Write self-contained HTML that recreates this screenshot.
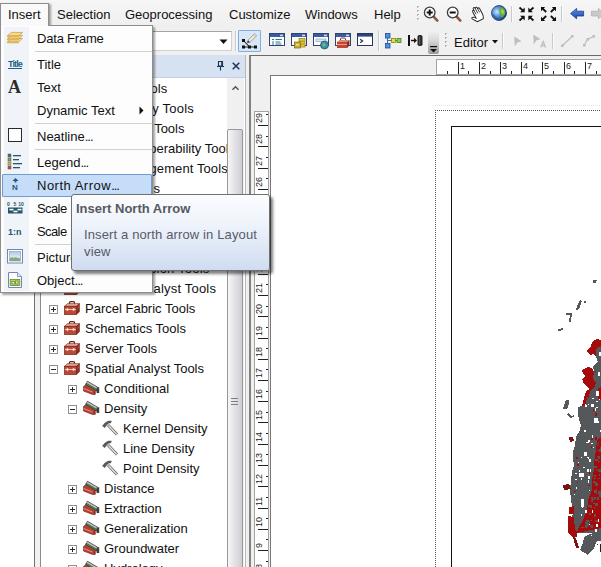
<!DOCTYPE html>
<html><head><meta charset="utf-8"><title>ArcMap</title>
<style>
*{box-sizing:border-box;margin:0;padding:0}
html,body{width:601px;height:567px;overflow:hidden;background:#f0f0f0;font-family:"Liberation Sans",sans-serif;font-size:13px;color:#1c1c1c}
body{position:relative}
.a{position:absolute}
svg{position:absolute;overflow:visible}
#menubar{position:absolute;left:0;top:0;width:601px;height:28px;background:linear-gradient(#f6f6f6,#efefef)}
.mi{position:absolute;top:7px;height:16px;line-height:16px;white-space:nowrap;color:#111}
#ins{position:absolute;left:0px;top:3px;width:49px;height:23px;border:1px solid #8e8e8e;border-bottom:none;background:#f9f9f9;box-shadow:2px 1px 2px rgba(0,0,0,.35)}
#tb2{position:absolute;left:0;top:28px;width:601px;height:27px;background:#f0f0f0}
#combo{position:absolute;left:100px;top:31px;width:132px;height:20px;background:#fff;border:1px solid #d0d0d0;border-top-color:#a5a5a5}
#toc{position:absolute;left:0;top:55px;width:35px;height:512px;background:#fff;border-right:1px solid #6f6f6f}
#tbx{position:absolute;left:40px;top:55px;width:206px;height:512px;background:#fff;border-left:1px solid #8c8c8c;border-right:1px solid #b8b8b8}
#tbxhead{position:absolute;left:0;top:0;width:204px;height:23px;background:#d6e2f1;border-bottom:1px solid #c3d0e2}
.row{position:absolute;height:20px;white-space:nowrap;line-height:20px;color:#111}
.pm{position:absolute;width:9px;height:9px;border:1px solid #8f8f8f;background:#fff}
.pm:before{content:"";position:absolute;left:1px;top:3px;width:5px;height:1px;background:#2a2a2a}
.pm.p:after{content:"";position:absolute;left:3px;top:1px;width:1px;height:5px;background:#2a2a2a}
#sb{position:absolute;left:186px;top:23px;width:17px;height:490px;background:#f0f0f0}
#thumb{position:absolute;left:0;top:51px;width:16px;height:560px;border:1px solid #989898;border-radius:2px;background:linear-gradient(90deg,#f6f6f7,#e4e4e8 45%,#cdcdd3)}
#mapw{position:absolute;left:249px;top:55px;width:360px;height:520px;border-top:1px solid #696969;border-left:2px solid #828282;background:#f0f0f0}
#page{position:absolute;left:270px;top:75px;width:340px;height:500px;background:#fff;border-left:1px solid #777;border-top:1px solid #777}
#vr{position:absolute;left:254px;top:111px;width:15px;height:470px;background:#fff;border:1px solid #a3a3a3}
#hr{position:absolute;left:436px;top:59px;width:170px;height:16px;background:#fff;border:1px solid #a3a3a3}
.rl{position:absolute;font-size:9px;line-height:9px;color:#222;white-space:nowrap}
#menu{position:absolute;left:0px;top:25px;width:153px;height:268px;background:#fdfdfd;border:1px solid #8e8e8e;box-shadow:2px 2px 2px rgba(0,0,0,.36)}
#gut{position:absolute;left:3px;top:1px;width:25px;height:264px;background:#f0f3f8}
.m{position:absolute;left:36px;height:23px;line-height:23px;white-space:nowrap;color:#111}
.sep{position:absolute;left:34px;width:117px;height:1px;background:#d0d0d0}
#hl{position:absolute;left:1px;top:148px;width:150px;height:23px;border:1px solid #6f9dd3;border-radius:1px;background:#c5ddf8}
#tip{position:absolute;left:71px;top:194px;width:199px;height:77px;border:1px solid #707070;border-radius:3px;background:linear-gradient(#fbfcfe,#eef3fb 40%,#cfdcf0);box-shadow:3px 3px 3px rgba(0,0,0,.5);color:#565c66}
</style></head><body>
<div id="menubar">
 <div id="ins"></div>
 <span class="mi" style="left:8px">Insert</span>
 <span class="mi" style="left:57px">Selection</span>
 <span class="mi" style="left:125px">Geoprocessing</span>
 <span class="mi" style="left:229px">Customize</span>
 <span class="mi" style="left:305px">Windows</span>
 <span class="mi" style="left:374px">Help</span>
 <svg style="left:417px;top:6px" width="3" height="16" viewBox="0 0 3 16"><rect x="0" y="0" width="2" height="2" fill="#aeb2b8"/><rect x="1" y="1" width="1" height="1" fill="#fdfdfd"/><rect x="0" y="4" width="2" height="2" fill="#aeb2b8"/><rect x="1" y="5" width="1" height="1" fill="#fdfdfd"/><rect x="0" y="8" width="2" height="2" fill="#aeb2b8"/><rect x="1" y="9" width="1" height="1" fill="#fdfdfd"/><rect x="0" y="12" width="2" height="2" fill="#aeb2b8"/><rect x="1" y="13" width="1" height="1" fill="#fdfdfd"/></svg>
<svg style="left:423px;top:5.5px" width="17" height="17" viewBox="0 0 17 17"><path d="M10.200 10.200L14.300 14.600" stroke="#8a5a3c" stroke-width="2.600" stroke-linecap="round"/><circle cx="6.7" cy="6.5" r="5.3" fill="#fdfdfd" stroke="#3c3c3c" stroke-width="1.3"/><path d="M3.7 6.5h6M6.7 3.5v6" stroke="#111" stroke-width="2"/></svg>
<svg style="left:445.5px;top:5.5px" width="17" height="17" viewBox="0 0 17 17"><path d="M10.200 10.200L14.300 14.600" stroke="#8a5a3c" stroke-width="2.600" stroke-linecap="round"/><circle cx="6.7" cy="6.5" r="5.3" fill="#fdfdfd" stroke="#3c3c3c" stroke-width="1.3"/><path d="M3.7 6.5h6" stroke="#111" stroke-width="2"/></svg>
<svg style="left:469px;top:5.5px" width="15" height="16" viewBox="0 0 15 16"><g transform="rotate(-28 7 8) translate(0.500 0.300)"><path d="M4.200 15.200L1 10.600Q0.400 9.400 1.400 9 2.400 8.800 3.200 9.800L4.600 11.400V4.400Q4.600 3.200 5.500 3.200 6.400 3.200 6.400 4.400V2.200Q6.400 1 7.400 1 8.400 1 8.400 2.200V3Q8.400 1.800 9.400 1.800 10.400 1.800 10.400 3V4.400Q10.400 3.400 11.300 3.400 12.200 3.400 12.200 4.600V11Q12.200 13.400 10.800 15.200z" fill="#fff" stroke="#2a2a2a" stroke-width="1"/><path d="M6.400 4.400V8M8.400 3V8M10.400 4.400V8" stroke="#2a2a2a" stroke-width=".8" fill="none"/></g></svg>
<svg style="left:490.7px;top:5px" width="16" height="16" viewBox="0 0 16 16"><defs><radialGradient id="gg" cx=".36" cy=".42" r=".62"><stop offset="0" stop-color="#cfe6f8"/><stop offset=".45" stop-color="#5a9bd8"/><stop offset="1" stop-color="#173f78"/></radialGradient></defs><circle cx="8" cy="8" r="7.500" fill="url(#gg)" stroke="#1b3f6e" stroke-width=".8"/><path d="M8.600 2.400Q11.600 2 13.600 4.600 14.800 7 14 9.600 12.600 12 10.400 12.400 9.200 11 9.800 9 8.200 7.600 8.400 5.800 7.800 4 8.600 2.400z" fill="#69ad3c"/><path d="M10 4.500Q12 4.200 13 6 13.200 8 12 9.200 10.600 8.800 10.400 7z" fill="#a6d45e"/><path d="M2 9.500Q3.500 12.500 6.500 13.800" stroke="#123260" stroke-width="1.200" fill="none" opacity=".5"/></svg>
<div class="a" style="left:511px;top:6px;width:1px;height:16px;background:#c6c9ce"></div><div class="a" style="left:512px;top:6px;width:1px;height:16px;background:#fbfbfb"></div>
<svg style="left:518.5px;top:6.8px" width="15" height="14" viewBox="0 0 15 14"><path d="M0.5 0.5L4.9 4.4" stroke="#111" stroke-width="1.800"/><path d="M5.7 5.2L1.1000000000000005 5.2L5.7 0.6000000000000005z" fill="#111"/><path d="M14.5 0.5L10.1 4.4" stroke="#111" stroke-width="1.800"/><path d="M9.299999999999999 5.2L13.899999999999999 5.2L9.299999999999999 0.6000000000000005z" fill="#111"/><path d="M0.5 13.5L4.9 9.6" stroke="#111" stroke-width="1.800"/><path d="M5.7 8.799999999999999L1.1000000000000005 8.799999999999999L5.7 13.399999999999999z" fill="#111"/><path d="M14.5 13.5L10.1 9.6" stroke="#111" stroke-width="1.800"/><path d="M9.299999999999999 8.799999999999999L13.899999999999999 8.799999999999999L9.299999999999999 13.399999999999999z" fill="#111"/></svg>
<svg style="left:540.5px;top:6.8px" width="15" height="14" viewBox="0 0 15 14"><path d="M1 1L5.2 5" stroke="#111" stroke-width="1.800"/><path d="M0 0L4.2 0L0 4.2z" fill="#111"/><path d="M14 1L9.8 5" stroke="#111" stroke-width="1.800"/><path d="M15 0L10.8 0L15 4.2z" fill="#111"/><path d="M1 13L5.2 9" stroke="#111" stroke-width="1.800"/><path d="M0 14L4.2 14L0 9.8z" fill="#111"/><path d="M14 13L9.8 9" stroke="#111" stroke-width="1.800"/><path d="M15 14L10.8 14L15 9.8z" fill="#111"/></svg>
<div class="a" style="left:561px;top:6px;width:1px;height:16px;background:#c6c9ce"></div><div class="a" style="left:562px;top:6px;width:1px;height:16px;background:#fbfbfb"></div>
<svg style="left:570px;top:8px" width="14" height="11" viewBox="0 0 14 11"><defs><linearGradient id="bg1" x1="0" y1="0" x2="0" y2="1"><stop offset="0" stop-color="#5f94e6"/><stop offset="1" stop-color="#1442a8"/></linearGradient></defs><path d="M0.6 5.6L6.6 0.4V3.2H13.6V8H6.6V10.8z" fill="url(#bg1)" stroke="#173b8c" stroke-width=".8"/></svg>
<svg style="left:591px;top:8px" width="14" height="11" viewBox="0 0 14 11"><path d="M13.4 5.6L7.4 0.4V3.2H0.4V8H7.4V10.8z" fill="#c9c9c9" stroke="#b4b4b4" stroke-width=".8"/></svg>
</div>
<div id="tb2">
 <div class="a" style="left:235px;top:3px;width:1px;height:20px;background:#c6c9ce"></div><div class="a" style="left:236px;top:3px;width:1px;height:20px;background:#fbfbfb"></div>
<div class="a" style="left:238px;top:2px;width:23px;height:22px;border:1px solid #84acdd;border-radius:1px;background:#d7e7f9"></div>
<svg style="left:239px;top:5px" width="20" height="17" viewBox="0 0 20 17"><path d="M4.5 7.5L10.5 14" stroke="#222" stroke-width="1.1"/><path d="M4.5 14H16.5" stroke="#222" stroke-width="1"/><rect x="3" y="6" width="3" height="3" fill="#111"/><rect x="3" y="12.5" width="3" height="3" fill="#111"/><rect x="9" y="12.5" width="3" height="3" fill="#111"/><rect x="15" y="12.5" width="3" height="3" fill="#111"/><path d="M8.2 9.8L9 7.2 15.6 0.8 17.6 2.8 11 9.2z" fill="#f3ecd6" stroke="#8a8266" stroke-width=".7"/><path d="M8.2 9.8L9 7.2 11 9.2z" fill="#333"/><path d="M14.4 2L16.4 4" stroke="#b9b4a0" stroke-width=".8"/></svg>
<svg style="left:269px;top:5px" width="17" height="17" viewBox="0 0 17 17"><rect x="0.5" y="0.5" width="15" height="12" fill="#fff" stroke="#2d4474" stroke-width="1"/><rect x="1" y="1" width="14" height="3" fill="#3b5c9e"/><rect x="11" y="1.6" width="3" height="1.6" fill="#cfd9ee"/><path d="M3 6.5h2M3 9h2M6.5 6.5h6.5M6.5 9h5" stroke="#2f7d8c" stroke-width="1.2"/><path d="M3 11h2M6.5 11h6" stroke="#2f7d8c" stroke-width="1"/></svg>
<svg style="left:291px;top:5px" width="17" height="17" viewBox="0 0 17 17"><rect x="0.5" y="0.5" width="15" height="12" fill="#fff" stroke="#2d4474" stroke-width="1"/><rect x="1" y="1" width="14" height="3" fill="#3b5c9e"/><rect x="11" y="1.6" width="3" height="1.6" fill="#cfd9ee"/><rect x="8" y="5.5" width="6" height="8.5" fill="#e2c63c" stroke="#8f7a14" stroke-width=".7"/><path d="M8.6 8.2h4.8M8.6 11h4.8" stroke="#8f7a14" stroke-width=".7"/><rect x="3.5" y="9" width="6" height="6" fill="#c6b02c" stroke="#7b6a12" stroke-width=".7"/><rect x="5" y="11" width="3" height="1.4" fill="#f1e48c"/></svg>
<svg style="left:313px;top:5px" width="17" height="17" viewBox="0 0 17 17"><rect x="0.5" y="0.5" width="15" height="12" fill="#fff" stroke="#2d4474" stroke-width="1"/><rect x="1" y="1" width="14" height="3" fill="#3b5c9e"/><rect x="11" y="1.6" width="3" height="1.6" fill="#cfd9ee"/><rect x="3" y="6" width="10" height="2.4" fill="#dfe6f3" stroke="#7f93bd" stroke-width=".6"/><circle cx="11.5" cy="12" r="4" fill="#3a8fae" stroke="#1f4f66" stroke-width=".7"/><path d="M9.6 10.6q1.8-1 2.6.6 1 1.2-.4 2.4-1.6.2-2.2-1.4z" fill="#7cc15a"/></svg>
<svg style="left:335px;top:5px" width="17" height="17" viewBox="0 0 17 17"><rect x="0.5" y="0.5" width="15" height="12" fill="#fff" stroke="#2d4474" stroke-width="1"/><rect x="1" y="1" width="14" height="3" fill="#3b5c9e"/><rect x="11" y="1.6" width="3" height="1.6" fill="#cfd9ee"/><path d="M5.5 7V6q0-1 1-1h3q1 0 1 1v1" fill="none" stroke="#7d2b20" stroke-width="1"/><path d="M2 9L4.5 7h10L12 9z" fill="#dc8a78"/><path d="M12 9l2.500-2V12.500L12 15z" fill="#8a2d21"/><rect x="2" y="9" width="10" height="6" fill="#c24632"/><rect x="2" y="11" width="10" height=".9" fill="#e9a898"/></svg>
<svg style="left:357px;top:5px" width="17" height="14" viewBox="0 0 17 14"><rect x="0.5" y="0.5" width="15" height="12" fill="#fff" stroke="#27365e" stroke-width="1"/><rect x="1" y="1" width="14" height="2.6" fill="#2f447c"/><path d="M3.200 6.200L5.600 8 3.200 9.800" fill="none" stroke="#1f2f55" stroke-width="1.200"/></svg>
<div class="a" style="left:378px;top:3px;width:1px;height:20px;background:#c6c9ce"></div><div class="a" style="left:379px;top:3px;width:1px;height:20px;background:#fbfbfb"></div>
<svg style="left:385px;top:4.5px" width="17" height="16" viewBox="0 0 17 16"><path d="M2.500 2.500V12.500M2.500 7.500H14" stroke="#4a6a9a" stroke-width="1" fill="none"/><rect x="0.500" y="0.500" width="4.500" height="4.500" fill="#4f8fe0" stroke="#1f4fa0" stroke-width=".8"/><rect x="0.500" y="10.500" width="4.500" height="4.500" fill="#4f8fe0" stroke="#1f4fa0" stroke-width=".8"/><rect x="6.500" y="5.500" width="4" height="4" fill="#d9e04a" stroke="#7d8a1a" stroke-width=".8"/><rect x="12" y="5.500" width="4" height="4" fill="#8fd04a" stroke="#4a7d1a" stroke-width=".8"/></svg>
<svg style="left:408px;top:7px" width="15" height="11" viewBox="0 0 15 11"><rect x="0" y="0" width="2" height="11" fill="#111"/><path d="M3 5.500h4" stroke="#111" stroke-width="1.400"/><path d="M6 2.800L9 5.500 6 8.200z" fill="#111"/><rect x="9.500" y="0" width="5" height="11" rx="1.800" fill="#262626"/><rect x="11.200" y="1.500" width="1" height="8" fill="#6a6a6a"/></svg>
<div class="a" style="left:428px;top:3px;width:11px;height:23px;border-radius:0 0 2px 2px;background:linear-gradient(#f0f0f0,#d9d9d9 40%,#9c9c9c)"></div>
<svg style="left:430px;top:18px" width="7" height="7" viewBox="0 0 7 7"><rect x="0" y="0" width="7" height="1.200" fill="#111"/><path d="M0 3h7L3.500 6.600z" fill="#111"/></svg>
<svg style="left:445px;top:5px" width="3" height="16" viewBox="0 0 3 16"><rect x="0" y="0" width="2" height="2" fill="#aeb2b8"/><rect x="1" y="1" width="1" height="1" fill="#fdfdfd"/><rect x="0" y="4" width="2" height="2" fill="#aeb2b8"/><rect x="1" y="5" width="1" height="1" fill="#fdfdfd"/><rect x="0" y="8" width="2" height="2" fill="#aeb2b8"/><rect x="1" y="9" width="1" height="1" fill="#fdfdfd"/><rect x="0" y="12" width="2" height="2" fill="#aeb2b8"/><rect x="1" y="13" width="1" height="1" fill="#fdfdfd"/></svg>
<span class="a" style="left:454px;top:7px;line-height:16px;white-space:nowrap;color:#111">Editor</span>
<svg style="left:492px;top:12px" width="6" height="4" viewBox="0 0 6 4"><path d="M0 0h6L3 3.600z" fill="#111"/></svg>
<div class="a" style="left:502px;top:5px;width:1px;height:16px;background:#c6c9ce"></div><div class="a" style="left:503px;top:5px;width:1px;height:16px;background:#fbfbfb"></div>
<svg style="left:514px;top:8px" width="8" height="11" viewBox="0 0 8 11"><path d="M0.300 0.500L7.500 5.200 3.200 6.400 0.800 10.500z" fill="#bdbdbd"/></svg>
<svg style="left:533px;top:5.5px" width="14" height="14" viewBox="0 0 14 14"><path d="M0.300 0.500L7.500 5.200 3.200 6.400 0.800 10.500z" fill="#bdbdbd"/><path d="M7.800 13.500L10.200 7.500 12.600 13.500M8.800 11.500h2.800" fill="none" stroke="#bdbdbd" stroke-width="1.300"/></svg>
<div class="a" style="left:552px;top:5px;width:1px;height:16px;background:#c6c9ce"></div><div class="a" style="left:553px;top:5px;width:1px;height:16px;background:#fbfbfb"></div>
<svg style="left:561px;top:7px" width="13" height="12" viewBox="0 0 13 12"><path d="M1.500 10.500L11 1.500" stroke="#bdbdbd" stroke-width="1.200"/><rect x="0" y="9.500" width="2.500" height="2.500" fill="#bdbdbd"/><rect x="10" y="0" width="2.500" height="2.500" fill="#bdbdbd"/></svg>
<svg style="left:583px;top:7px" width="13" height="12" viewBox="0 0 13 12"><path d="M1.500 10.500Q2.500 4 11 1.500" fill="none" stroke="#bdbdbd" stroke-width="1.200"/><rect x="0" y="9" width="2.500" height="2.500" fill="#bdbdbd"/><rect x="9.500" y="0" width="2.500" height="2.500" fill="#bdbdbd"/><rect x="3.500" y="3" width="2.500" height="2.500" fill="#bdbdbd"/></svg>
</div>
<div id="combo"></div>
<svg style="left:219px;top:39px" width="9" height="6" viewBox="0 0 9 6"><path d="M0.5 0.5h8L4.5 5z" fill="#111"/></svg>
<div id="toc"></div>
<div id="tbx">
 <div id="tbxhead"><svg style="left:176px;top:5.5px" width="7" height="10" viewBox="0 0 7 10"><path d="M1.500 0.500h4v4.500h-4zM0 5.500h7M3.500 5.500v4" fill="none" stroke="#1d3557" stroke-width="1.100"/><path d="M4.800 0.500v4.500" stroke="#1d3557" stroke-width="1.200"/></svg><svg style="left:191px;top:6.5px" width="8" height="8" viewBox="0 0 8 8"><path d="M0.700 0.700L7.300 7.300M7.300 0.700L0.700 7.300" stroke="#1d3557" stroke-width="1.500"/></svg></div>
 <div class="pm p" style="left:8px;top:30px"></div>
<svg style="left:23px;top:25px" width="16" height="16" viewBox="0 0 16 16"><path d="M5.500 4V2.600Q5.500 1.600 6.500 1.600H9.500Q10.500 1.600 10.500 2.600V4" fill="none" stroke="#5e2018" stroke-width="1.300"/><path d="M0.500 6.300L3.500 3.600H15.500L12.500 6.300z" fill="#e7a596" stroke="#7d2b20" stroke-width=".6"/><path d="M12.500 6.300L15.500 3.600V11.800L12.500 14.500z" fill="#8a2d21" stroke="#6a2219" stroke-width=".5"/><rect x="0.500" y="6.300" width="12" height="8.200" fill="#bf4834" stroke="#6a2219" stroke-width=".7"/><rect x="0.900" y="9" width="11.200" height="1" fill="#f0bdb1"/><rect x="2.600" y="8.300" width="1.700" height="2.400" fill="#fbeeea"/><rect x="8.700" y="8.300" width="1.700" height="2.400" fill="#fbeeea"/><path d="M13 8.500L15 6.700" stroke="#d77" stroke-width=".6"/></svg>
<span class="row" style="left:44px;top:24px">Analysis Tools</span>
<div class="pm p" style="left:8px;top:50px"></div>
<svg style="left:23px;top:45px" width="16" height="16" viewBox="0 0 16 16"><path d="M5.500 4V2.600Q5.500 1.600 6.500 1.600H9.500Q10.500 1.600 10.500 2.600V4" fill="none" stroke="#5e2018" stroke-width="1.300"/><path d="M0.500 6.300L3.500 3.600H15.500L12.500 6.300z" fill="#e7a596" stroke="#7d2b20" stroke-width=".6"/><path d="M12.500 6.300L15.500 3.600V11.800L12.500 14.500z" fill="#8a2d21" stroke="#6a2219" stroke-width=".5"/><rect x="0.500" y="6.300" width="12" height="8.200" fill="#bf4834" stroke="#6a2219" stroke-width=".7"/><rect x="0.900" y="9" width="11.200" height="1" fill="#f0bdb1"/><rect x="2.600" y="8.300" width="1.700" height="2.400" fill="#fbeeea"/><rect x="8.700" y="8.300" width="1.700" height="2.400" fill="#fbeeea"/><path d="M13 8.500L15 6.700" stroke="#d77" stroke-width=".6"/></svg>
<span class="row" style="left:44px;top:44px;letter-spacing:0.22px">Cartography Tools</span>
<div class="pm p" style="left:8px;top:70px"></div>
<svg style="left:23px;top:65px" width="16" height="16" viewBox="0 0 16 16"><path d="M5.500 4V2.600Q5.500 1.600 6.500 1.600H9.500Q10.500 1.600 10.500 2.600V4" fill="none" stroke="#5e2018" stroke-width="1.300"/><path d="M0.500 6.300L3.500 3.600H15.500L12.500 6.300z" fill="#e7a596" stroke="#7d2b20" stroke-width=".6"/><path d="M12.500 6.300L15.500 3.600V11.800L12.500 14.500z" fill="#8a2d21" stroke="#6a2219" stroke-width=".5"/><rect x="0.500" y="6.300" width="12" height="8.200" fill="#bf4834" stroke="#6a2219" stroke-width=".7"/><rect x="0.900" y="9" width="11.200" height="1" fill="#f0bdb1"/><rect x="2.600" y="8.300" width="1.700" height="2.400" fill="#fbeeea"/><rect x="8.700" y="8.300" width="1.700" height="2.400" fill="#fbeeea"/><path d="M13 8.500L15 6.700" stroke="#d77" stroke-width=".6"/></svg>
<span class="row" style="left:44px;top:64px">Conversion Tools</span>
<div class="pm p" style="left:8px;top:90px"></div>
<svg style="left:23px;top:85px" width="16" height="16" viewBox="0 0 16 16"><path d="M5.500 4V2.600Q5.500 1.600 6.500 1.600H9.500Q10.500 1.600 10.500 2.600V4" fill="none" stroke="#5e2018" stroke-width="1.300"/><path d="M0.500 6.300L3.500 3.600H15.500L12.500 6.300z" fill="#e7a596" stroke="#7d2b20" stroke-width=".6"/><path d="M12.500 6.300L15.500 3.600V11.800L12.500 14.500z" fill="#8a2d21" stroke="#6a2219" stroke-width=".5"/><rect x="0.500" y="6.300" width="12" height="8.200" fill="#bf4834" stroke="#6a2219" stroke-width=".7"/><rect x="0.900" y="9" width="11.200" height="1" fill="#f0bdb1"/><rect x="2.600" y="8.300" width="1.700" height="2.400" fill="#fbeeea"/><rect x="8.700" y="8.300" width="1.700" height="2.400" fill="#fbeeea"/><path d="M13 8.500L15 6.700" stroke="#d77" stroke-width=".6"/></svg>
<span class="row" style="left:44px;top:84px">Data Interoperability Tools</span>
<div class="pm p" style="left:8px;top:110px"></div>
<svg style="left:23px;top:105px" width="16" height="16" viewBox="0 0 16 16"><path d="M5.500 4V2.600Q5.500 1.600 6.500 1.600H9.500Q10.500 1.600 10.500 2.600V4" fill="none" stroke="#5e2018" stroke-width="1.300"/><path d="M0.500 6.300L3.500 3.600H15.500L12.500 6.300z" fill="#e7a596" stroke="#7d2b20" stroke-width=".6"/><path d="M12.500 6.300L15.500 3.600V11.800L12.500 14.500z" fill="#8a2d21" stroke="#6a2219" stroke-width=".5"/><rect x="0.500" y="6.300" width="12" height="8.200" fill="#bf4834" stroke="#6a2219" stroke-width=".7"/><rect x="0.900" y="9" width="11.200" height="1" fill="#f0bdb1"/><rect x="2.600" y="8.300" width="1.700" height="2.400" fill="#fbeeea"/><rect x="8.700" y="8.300" width="1.700" height="2.400" fill="#fbeeea"/><path d="M13 8.500L15 6.700" stroke="#d77" stroke-width=".6"/></svg>
<span class="row" style="left:44px;top:104px;letter-spacing:0.1px">Data Management Tools</span>
<div class="pm p" style="left:8px;top:130px"></div>
<svg style="left:23px;top:125px" width="16" height="16" viewBox="0 0 16 16"><path d="M5.500 4V2.600Q5.500 1.600 6.500 1.600H9.500Q10.500 1.600 10.500 2.600V4" fill="none" stroke="#5e2018" stroke-width="1.300"/><path d="M0.500 6.300L3.500 3.600H15.500L12.500 6.300z" fill="#e7a596" stroke="#7d2b20" stroke-width=".6"/><path d="M12.500 6.300L15.500 3.600V11.800L12.500 14.500z" fill="#8a2d21" stroke="#6a2219" stroke-width=".5"/><rect x="0.500" y="6.300" width="12" height="8.200" fill="#bf4834" stroke="#6a2219" stroke-width=".7"/><rect x="0.900" y="9" width="11.200" height="1" fill="#f0bdb1"/><rect x="2.600" y="8.300" width="1.700" height="2.400" fill="#fbeeea"/><rect x="8.700" y="8.300" width="1.700" height="2.400" fill="#fbeeea"/><path d="M13 8.500L15 6.700" stroke="#d77" stroke-width=".6"/></svg>
<span class="row" style="left:44px;top:124px;letter-spacing:0.12px">Editing Tools</span>
<div class="pm p" style="left:8px;top:150px"></div>
<svg style="left:23px;top:145px" width="16" height="16" viewBox="0 0 16 16"><path d="M5.500 4V2.600Q5.500 1.600 6.500 1.600H9.500Q10.500 1.600 10.500 2.600V4" fill="none" stroke="#5e2018" stroke-width="1.300"/><path d="M0.500 6.300L3.500 3.600H15.500L12.500 6.300z" fill="#e7a596" stroke="#7d2b20" stroke-width=".6"/><path d="M12.500 6.300L15.500 3.600V11.800L12.500 14.500z" fill="#8a2d21" stroke="#6a2219" stroke-width=".5"/><rect x="0.500" y="6.300" width="12" height="8.200" fill="#bf4834" stroke="#6a2219" stroke-width=".7"/><rect x="0.900" y="9" width="11.200" height="1" fill="#f0bdb1"/><rect x="2.600" y="8.300" width="1.700" height="2.400" fill="#fbeeea"/><rect x="8.700" y="8.300" width="1.700" height="2.400" fill="#fbeeea"/><path d="M13 8.500L15 6.700" stroke="#d77" stroke-width=".6"/></svg>
<span class="row" style="left:44px;top:144px">Geocoding Tools</span>
<div class="pm p" style="left:8px;top:170px"></div>
<svg style="left:23px;top:165px" width="16" height="16" viewBox="0 0 16 16"><path d="M5.500 4V2.600Q5.500 1.600 6.500 1.600H9.500Q10.500 1.600 10.500 2.600V4" fill="none" stroke="#5e2018" stroke-width="1.300"/><path d="M0.500 6.300L3.500 3.600H15.500L12.500 6.300z" fill="#e7a596" stroke="#7d2b20" stroke-width=".6"/><path d="M12.500 6.300L15.500 3.600V11.800L12.500 14.500z" fill="#8a2d21" stroke="#6a2219" stroke-width=".5"/><rect x="0.500" y="6.300" width="12" height="8.200" fill="#bf4834" stroke="#6a2219" stroke-width=".7"/><rect x="0.900" y="9" width="11.200" height="1" fill="#f0bdb1"/><rect x="2.600" y="8.300" width="1.700" height="2.400" fill="#fbeeea"/><rect x="8.700" y="8.300" width="1.700" height="2.400" fill="#fbeeea"/><path d="M13 8.500L15 6.700" stroke="#d77" stroke-width=".6"/></svg>
<span class="row" style="left:44px;top:164px">Geostatistical Analyst Tools</span>
<div class="pm p" style="left:8px;top:190px"></div>
<svg style="left:23px;top:185px" width="16" height="16" viewBox="0 0 16 16"><path d="M5.500 4V2.600Q5.500 1.600 6.500 1.600H9.500Q10.500 1.600 10.500 2.600V4" fill="none" stroke="#5e2018" stroke-width="1.300"/><path d="M0.500 6.300L3.500 3.600H15.500L12.500 6.300z" fill="#e7a596" stroke="#7d2b20" stroke-width=".6"/><path d="M12.500 6.300L15.500 3.600V11.800L12.500 14.500z" fill="#8a2d21" stroke="#6a2219" stroke-width=".5"/><rect x="0.500" y="6.300" width="12" height="8.200" fill="#bf4834" stroke="#6a2219" stroke-width=".7"/><rect x="0.900" y="9" width="11.200" height="1" fill="#f0bdb1"/><rect x="2.600" y="8.300" width="1.700" height="2.400" fill="#fbeeea"/><rect x="8.700" y="8.300" width="1.700" height="2.400" fill="#fbeeea"/><path d="M13 8.500L15 6.700" stroke="#d77" stroke-width=".6"/></svg>
<span class="row" style="left:44px;top:184px">Linear Referencing Tools</span>
<div class="pm p" style="left:8px;top:210px"></div>
<svg style="left:23px;top:205px" width="16" height="16" viewBox="0 0 16 16"><path d="M5.500 4V2.600Q5.500 1.600 6.500 1.600H9.500Q10.500 1.600 10.500 2.600V4" fill="none" stroke="#5e2018" stroke-width="1.300"/><path d="M0.500 6.300L3.500 3.600H15.500L12.500 6.300z" fill="#e7a596" stroke="#7d2b20" stroke-width=".6"/><path d="M12.500 6.300L15.500 3.600V11.800L12.500 14.500z" fill="#8a2d21" stroke="#6a2219" stroke-width=".5"/><rect x="0.500" y="6.300" width="12" height="8.200" fill="#bf4834" stroke="#6a2219" stroke-width=".7"/><rect x="0.900" y="9" width="11.200" height="1" fill="#f0bdb1"/><rect x="2.600" y="8.300" width="1.700" height="2.400" fill="#fbeeea"/><rect x="8.700" y="8.300" width="1.700" height="2.400" fill="#fbeeea"/><path d="M13 8.500L15 6.700" stroke="#d77" stroke-width=".6"/></svg>
<span class="row" style="left:44px;top:204px;letter-spacing:0.2px">Multidimension Tools</span>
<svg style="left:23px;top:225px" width="16" height="16" viewBox="0 0 16 16"><path d="M5.500 4V2.600Q5.500 1.600 6.500 1.600H9.500Q10.500 1.600 10.500 2.600V4" fill="none" stroke="#5e2018" stroke-width="1.300"/><path d="M0.500 6.300L3.500 3.600H15.500L12.500 6.300z" fill="#e7a596" stroke="#7d2b20" stroke-width=".6"/><path d="M12.500 6.300L15.500 3.600V11.800L12.500 14.500z" fill="#8a2d21" stroke="#6a2219" stroke-width=".5"/><rect x="0.500" y="6.300" width="12" height="8.200" fill="#bf4834" stroke="#6a2219" stroke-width=".7"/><rect x="0.900" y="9" width="11.200" height="1" fill="#f0bdb1"/><rect x="2.600" y="8.300" width="1.700" height="2.400" fill="#fbeeea"/><rect x="8.700" y="8.300" width="1.700" height="2.400" fill="#fbeeea"/><path d="M13 8.500L15 6.700" stroke="#d77" stroke-width=".6"/></svg>
<span class="row" style="left:44px;top:224px;letter-spacing:0.2px">Network Analyst Tools</span>
<div class="pm p" style="left:8px;top:250px"></div>
<svg style="left:23px;top:245px" width="16" height="16" viewBox="0 0 16 16"><path d="M5.500 4V2.600Q5.500 1.600 6.500 1.600H9.500Q10.500 1.600 10.500 2.600V4" fill="none" stroke="#5e2018" stroke-width="1.300"/><path d="M0.500 6.300L3.500 3.600H15.500L12.500 6.300z" fill="#e7a596" stroke="#7d2b20" stroke-width=".6"/><path d="M12.500 6.300L15.500 3.600V11.800L12.500 14.500z" fill="#8a2d21" stroke="#6a2219" stroke-width=".5"/><rect x="0.500" y="6.300" width="12" height="8.200" fill="#bf4834" stroke="#6a2219" stroke-width=".7"/><rect x="0.900" y="9" width="11.200" height="1" fill="#f0bdb1"/><rect x="2.600" y="8.300" width="1.700" height="2.400" fill="#fbeeea"/><rect x="8.700" y="8.300" width="1.700" height="2.400" fill="#fbeeea"/><path d="M13 8.500L15 6.700" stroke="#d77" stroke-width=".6"/></svg>
<span class="row" style="left:44px;top:244px">Parcel Fabric Tools</span>
<div class="pm p" style="left:8px;top:270px"></div>
<svg style="left:23px;top:265px" width="16" height="16" viewBox="0 0 16 16"><path d="M5.500 4V2.600Q5.500 1.600 6.500 1.600H9.500Q10.500 1.600 10.500 2.600V4" fill="none" stroke="#5e2018" stroke-width="1.300"/><path d="M0.500 6.300L3.500 3.600H15.500L12.500 6.300z" fill="#e7a596" stroke="#7d2b20" stroke-width=".6"/><path d="M12.500 6.300L15.500 3.600V11.800L12.500 14.500z" fill="#8a2d21" stroke="#6a2219" stroke-width=".5"/><rect x="0.500" y="6.300" width="12" height="8.200" fill="#bf4834" stroke="#6a2219" stroke-width=".7"/><rect x="0.900" y="9" width="11.200" height="1" fill="#f0bdb1"/><rect x="2.600" y="8.300" width="1.700" height="2.400" fill="#fbeeea"/><rect x="8.700" y="8.300" width="1.700" height="2.400" fill="#fbeeea"/><path d="M13 8.500L15 6.700" stroke="#d77" stroke-width=".6"/></svg>
<span class="row" style="left:44px;top:264px">Schematics Tools</span>
<div class="pm p" style="left:8px;top:290px"></div>
<svg style="left:23px;top:285px" width="16" height="16" viewBox="0 0 16 16"><path d="M5.500 4V2.600Q5.500 1.600 6.500 1.600H9.500Q10.500 1.600 10.500 2.600V4" fill="none" stroke="#5e2018" stroke-width="1.300"/><path d="M0.500 6.300L3.500 3.600H15.500L12.500 6.300z" fill="#e7a596" stroke="#7d2b20" stroke-width=".6"/><path d="M12.500 6.300L15.500 3.600V11.800L12.500 14.500z" fill="#8a2d21" stroke="#6a2219" stroke-width=".5"/><rect x="0.500" y="6.300" width="12" height="8.200" fill="#bf4834" stroke="#6a2219" stroke-width=".7"/><rect x="0.900" y="9" width="11.200" height="1" fill="#f0bdb1"/><rect x="2.600" y="8.300" width="1.700" height="2.400" fill="#fbeeea"/><rect x="8.700" y="8.300" width="1.700" height="2.400" fill="#fbeeea"/><path d="M13 8.500L15 6.700" stroke="#d77" stroke-width=".6"/></svg>
<span class="row" style="left:44px;top:284px">Server Tools</span>
<div class="pm " style="left:8px;top:310px"></div>
<svg style="left:23px;top:305px" width="16" height="16" viewBox="0 0 16 16"><path d="M5.500 4V2.600Q5.500 1.600 6.500 1.600H9.500Q10.500 1.600 10.500 2.600V4" fill="none" stroke="#5e2018" stroke-width="1.300"/><path d="M0.500 6.300L3.500 3.600H15.500L12.500 6.300z" fill="#e7a596" stroke="#7d2b20" stroke-width=".6"/><path d="M12.500 6.300L15.500 3.600V11.800L12.500 14.500z" fill="#8a2d21" stroke="#6a2219" stroke-width=".5"/><rect x="0.500" y="6.300" width="12" height="8.200" fill="#bf4834" stroke="#6a2219" stroke-width=".7"/><rect x="0.900" y="9" width="11.200" height="1" fill="#f0bdb1"/><rect x="2.600" y="8.300" width="1.700" height="2.400" fill="#fbeeea"/><rect x="8.700" y="8.300" width="1.700" height="2.400" fill="#fbeeea"/><path d="M13 8.500L15 6.700" stroke="#d77" stroke-width=".6"/></svg>
<span class="row" style="left:44px;top:304px">Spatial Analyst Tools</span>
<div class="pm p" style="left:27px;top:330px"></div>
<svg style="left:42px;top:325px" width="17" height="16" viewBox="0 0 17 16"><path d="M0.500 6.500L3 4.500 12 9.500V14.500H9.500L0.500 11z" fill="#b8402e" stroke="#6a2219" stroke-width=".6"/><path d="M0.500 8.500L9.500 12" stroke="#e9a99b" stroke-width=".8"/><path d="M3.200 2.600L15 9.600" stroke="#3f3f3f" stroke-width="4.400"/><path d="M3.800 2.200L15 8.800" stroke="#bdbdbd" stroke-width="1.600"/><path d="M3 3.600L14.400 10.400" stroke="#3f8f52" stroke-width="1.100"/><rect x="13.600" y="7.500" width="2.600" height="5.500" fill="#3d3d3d"/><path d="M12 10v4.500" stroke="#7c281d" stroke-width="1"/></svg>
<span class="row" style="left:63px;top:324px">Conditional</span>
<div class="pm " style="left:27px;top:350px"></div>
<svg style="left:42px;top:345px" width="17" height="16" viewBox="0 0 17 16"><path d="M0.500 6.500L3 4.500 12 9.500V14.500H9.500L0.500 11z" fill="#b8402e" stroke="#6a2219" stroke-width=".6"/><path d="M0.500 8.500L9.500 12" stroke="#e9a99b" stroke-width=".8"/><path d="M3.200 2.600L15 9.600" stroke="#3f3f3f" stroke-width="4.400"/><path d="M3.800 2.200L15 8.800" stroke="#bdbdbd" stroke-width="1.600"/><path d="M3 3.600L14.400 10.400" stroke="#3f8f52" stroke-width="1.100"/><rect x="13.600" y="7.500" width="2.600" height="5.500" fill="#3d3d3d"/><path d="M12 10v4.500" stroke="#7c281d" stroke-width="1"/></svg>
<span class="row" style="left:63px;top:344px">Density</span>
<svg style="left:61px;top:365px" width="16" height="16" viewBox="0 0 16 16"><path d="M6 5L15 14.500" stroke="#6e6e6e" stroke-width="3"/><path d="M6.500 5.500L14.700 14.200" stroke="#e2e2e2" stroke-width="1.300"/><path d="M0.500 6L3 3 6 1.200 9.300 1 8.800 2.800 6.600 3.200 4.800 4.800 2.800 7.600z" fill="#5a5a5a" stroke="#3a3a3a" stroke-width=".5"/></svg>
<span class="row" style="left:82px;top:364px">Kernel Density</span>
<svg style="left:61px;top:385px" width="16" height="16" viewBox="0 0 16 16"><path d="M6 5L15 14.500" stroke="#6e6e6e" stroke-width="3"/><path d="M6.500 5.500L14.700 14.200" stroke="#e2e2e2" stroke-width="1.300"/><path d="M0.500 6L3 3 6 1.200 9.300 1 8.800 2.800 6.600 3.200 4.800 4.800 2.800 7.600z" fill="#5a5a5a" stroke="#3a3a3a" stroke-width=".5"/></svg>
<span class="row" style="left:82px;top:384px">Line Density</span>
<svg style="left:61px;top:405px" width="16" height="16" viewBox="0 0 16 16"><path d="M6 5L15 14.500" stroke="#6e6e6e" stroke-width="3"/><path d="M6.500 5.500L14.700 14.200" stroke="#e2e2e2" stroke-width="1.300"/><path d="M0.500 6L3 3 6 1.200 9.300 1 8.800 2.800 6.600 3.200 4.800 4.800 2.800 7.600z" fill="#5a5a5a" stroke="#3a3a3a" stroke-width=".5"/></svg>
<span class="row" style="left:82px;top:404px">Point Density</span>
<div class="pm p" style="left:27px;top:430px"></div>
<svg style="left:42px;top:425px" width="17" height="16" viewBox="0 0 17 16"><path d="M0.500 6.500L3 4.500 12 9.500V14.500H9.500L0.500 11z" fill="#b8402e" stroke="#6a2219" stroke-width=".6"/><path d="M0.500 8.500L9.500 12" stroke="#e9a99b" stroke-width=".8"/><path d="M3.200 2.600L15 9.600" stroke="#3f3f3f" stroke-width="4.400"/><path d="M3.800 2.200L15 8.800" stroke="#bdbdbd" stroke-width="1.600"/><path d="M3 3.600L14.400 10.400" stroke="#3f8f52" stroke-width="1.100"/><rect x="13.600" y="7.500" width="2.600" height="5.500" fill="#3d3d3d"/><path d="M12 10v4.500" stroke="#7c281d" stroke-width="1"/></svg>
<span class="row" style="left:63px;top:424px">Distance</span>
<div class="pm p" style="left:27px;top:450px"></div>
<svg style="left:42px;top:445px" width="17" height="16" viewBox="0 0 17 16"><path d="M0.500 6.500L3 4.500 12 9.500V14.500H9.500L0.500 11z" fill="#b8402e" stroke="#6a2219" stroke-width=".6"/><path d="M0.500 8.500L9.500 12" stroke="#e9a99b" stroke-width=".8"/><path d="M3.200 2.600L15 9.600" stroke="#3f3f3f" stroke-width="4.400"/><path d="M3.800 2.200L15 8.800" stroke="#bdbdbd" stroke-width="1.600"/><path d="M3 3.600L14.400 10.400" stroke="#3f8f52" stroke-width="1.100"/><rect x="13.600" y="7.500" width="2.600" height="5.500" fill="#3d3d3d"/><path d="M12 10v4.500" stroke="#7c281d" stroke-width="1"/></svg>
<span class="row" style="left:63px;top:444px">Extraction</span>
<div class="pm p" style="left:27px;top:470px"></div>
<svg style="left:42px;top:465px" width="17" height="16" viewBox="0 0 17 16"><path d="M0.500 6.500L3 4.500 12 9.500V14.500H9.500L0.500 11z" fill="#b8402e" stroke="#6a2219" stroke-width=".6"/><path d="M0.500 8.500L9.500 12" stroke="#e9a99b" stroke-width=".8"/><path d="M3.200 2.600L15 9.600" stroke="#3f3f3f" stroke-width="4.400"/><path d="M3.800 2.200L15 8.800" stroke="#bdbdbd" stroke-width="1.600"/><path d="M3 3.600L14.400 10.400" stroke="#3f8f52" stroke-width="1.100"/><rect x="13.600" y="7.500" width="2.600" height="5.500" fill="#3d3d3d"/><path d="M12 10v4.500" stroke="#7c281d" stroke-width="1"/></svg>
<span class="row" style="left:63px;top:464px">Generalization</span>
<div class="pm p" style="left:27px;top:490px"></div>
<svg style="left:42px;top:485px" width="17" height="16" viewBox="0 0 17 16"><path d="M0.500 6.500L3 4.500 12 9.500V14.500H9.500L0.500 11z" fill="#b8402e" stroke="#6a2219" stroke-width=".6"/><path d="M0.500 8.500L9.500 12" stroke="#e9a99b" stroke-width=".8"/><path d="M3.200 2.600L15 9.600" stroke="#3f3f3f" stroke-width="4.400"/><path d="M3.800 2.200L15 8.800" stroke="#bdbdbd" stroke-width="1.600"/><path d="M3 3.600L14.400 10.400" stroke="#3f8f52" stroke-width="1.100"/><rect x="13.600" y="7.500" width="2.600" height="5.500" fill="#3d3d3d"/><path d="M12 10v4.500" stroke="#7c281d" stroke-width="1"/></svg>
<span class="row" style="left:63px;top:484px">Groundwater</span>
<div class="pm p" style="left:27px;top:510px"></div>
<svg style="left:42px;top:505px" width="17" height="16" viewBox="0 0 17 16"><path d="M0.500 6.500L3 4.500 12 9.500V14.500H9.500L0.500 11z" fill="#b8402e" stroke="#6a2219" stroke-width=".6"/><path d="M0.500 8.500L9.500 12" stroke="#e9a99b" stroke-width=".8"/><path d="M3.200 2.600L15 9.600" stroke="#3f3f3f" stroke-width="4.400"/><path d="M3.800 2.200L15 8.800" stroke="#bdbdbd" stroke-width="1.600"/><path d="M3 3.600L14.400 10.400" stroke="#3f8f52" stroke-width="1.100"/><rect x="13.600" y="7.500" width="2.600" height="5.500" fill="#3d3d3d"/><path d="M12 10v4.500" stroke="#7c281d" stroke-width="1"/></svg>
<span class="row" style="left:63px;top:504px">Hydrology</span>
 <div id="sb"><div id="thumb"></div><svg style="left:5px;top:7.5px" width="7" height="5" viewBox="0 0 7 5"><path d="M0.500 3.800L3.500 0.800 6.500 3.800" fill="none" stroke="#505050" stroke-width="1.400"/></svg><svg style="left:4px;top:320px" width="8" height="7" viewBox="0 0 8 7"><path d="M0 0.500h7M0 3.500h7M0 6.500h7" stroke="#7f7f7f" stroke-width="1"/></svg></div>
</div>
<div id="mapw"></div>
<div id="page"></div>
<svg style="left:0;top:0" width="601" height="567" viewBox="0 0 601 567" shape-rendering="crispEdges"><path d="M433 105.5H601" stroke="#e4e4e4" stroke-width="1" stroke-dasharray="1 1"/><path d="M435.5 567V110.5H601" fill="none" stroke="#555" stroke-width="1" stroke-dasharray="1 1"/><path d="M451.5 567V126.500H601" fill="none" stroke="#111" stroke-width="1"/><polygon points="593,280 597,280 596,283 593,283" fill="#55585a"/><polygon points="580,300 582,301 579,309 576,310 577,306" fill="#55585a"/><polygon points="584,301 586,301 586,303 584,303" fill="#55585a"/><polygon points="566,313 572,313 571,322 569,322 570,315 566,315" fill="#55585a"/><polygon points="558,329 563,328 563,330 558,331" fill="#55585a"/><polygon points="566,400 569,400 569,404 567,409 563,409 564,405" fill="#55585a"/><polygon points="568,413 571,416 574,415 574,417 570,418 567,414" fill="#55585a"/><polygon points="569,437 573,437 574,441 570,442" fill="#7c1212"/><polygon points="598,346 596,349 596,356 598,362 593,366 594,371 593,378 594,384 591,388 587,392 585,400 587,407 582,406 578,407 578,414 579,420 581,425 580,430 576,437 575,445 573,452 573,458 574,465 572,472 571,480 570,490 571,500 573,510 572,520 573,528 577,533 601,533 601,346" fill="#55585a"/><polygon points="592,342 597,339 601,340 601,347 598,347 596,350 596,356 593,354 590,355 587,352 588,349 591,347" fill="#a60a0a"/><polygon points="582,370 588,367 592,368 594,372 593,378 596,383 594,388 590,391 588,387 584,384 582,379 585,376 583,373" fill="#a60a0a"/><polygon points="586,391 590,389 589,400 588,395 585,406 582,406 584,398" fill="#a60a0a"/><polygon points="598,388 601,387 601,400 598,399" fill="#a60a0a"/><polygon points="601,436 597,440 596,450 594,462 594,470 592,480 592,490 590,495 588,500 587,510 585,515 583,520 578,529 577,533 601,528" fill="#a60a0a"/><polygon points="584,537 590,534 601,531 601,541 597,541 594,548 588,555 580,550 583,543" fill="#55585a"/><polygon points="563,485 569,484 571,489 564,490" fill="#7c1212"/><polygon points="569,507 574,506 574,514 569,514" fill="#a60a0a"/><polygon points="568,516 574,517 575,530 579,533 577,537 573,537 568,533" fill="#a60a0a"/><polygon points="573,537 576,538 579,548 576,548" fill="#7c1212"/><polygon points="600,544 601,544 601,552 600,552" fill="#222"/><rect x="599" y="352" width="2" height="4" fill="#fff"/><rect x="596" y="391" width="3" height="5" fill="#fff"/><rect x="594" y="418" width="4" height="5" fill="#fff"/><rect x="584" y="430" width="2" height="2" fill="#fff"/><rect x="584" y="452" width="3" height="4" fill="#fff"/><rect x="579" y="473" width="5" height="4" fill="#fff"/><rect x="581" y="499" width="3" height="8" fill="#fff"/><rect x="585" y="510" width="2" height="3" fill="#fff"/><rect x="591" y="404" width="3" height="3" fill="#fff"/><rect x="588" y="440" width="2" height="2" fill="#fff"/><rect x="598" y="372" width="2" height="2" fill="#fff"/><rect x="577" y="533" width="8" height="4" fill="#fff"/><rect x="584" y="516" width="1" height="1" fill="#a60a0a"/><rect x="588" y="404" width="1" height="1" fill="#fff"/><rect x="574" y="491" width="2" height="1" fill="#a60a0a"/><rect x="592" y="510" width="1" height="3" fill="#fff"/><rect x="581" y="457" width="1" height="1" fill="#fff"/><rect x="589" y="524" width="1" height="1" fill="#fff"/><rect x="592" y="398" width="2" height="1" fill="#fff"/><rect x="574" y="494" width="1" height="1" fill="#fff"/><rect x="589" y="459" width="2" height="3" fill="#fff"/><rect x="586" y="442" width="2" height="1" fill="#fff"/><rect x="594" y="549" width="1" height="1" fill="#fff"/><rect x="588" y="476" width="2" height="3" fill="#fff"/><rect x="588" y="457" width="1" height="2" fill="#fff"/><rect x="587" y="457" width="1" height="1" fill="#fff"/><rect x="600" y="430" width="2" height="2" fill="#fff"/><rect x="598" y="373" width="2" height="3" fill="#fff"/><rect x="595" y="529" width="2" height="3" fill="#fff"/><rect x="584" y="521" width="2" height="1" fill="#a60a0a"/><rect x="595" y="413" width="2" height="3" fill="#a60a0a"/><rect x="577" y="464" width="2" height="2" fill="#a60a0a"/><rect x="598" y="460" width="2" height="3" fill="#a60a0a"/><rect x="593" y="447" width="1" height="1" fill="#fff"/><rect x="593" y="409" width="1" height="3" fill="#a60a0a"/><rect x="576" y="457" width="2" height="2" fill="#a60a0a"/><rect x="594" y="481" width="1" height="3" fill="#a60a0a"/><rect x="596" y="524" width="2" height="3" fill="#fff"/><rect x="575" y="473" width="2" height="1" fill="#fff"/><rect x="578" y="462" width="1" height="1" fill="#fff"/><rect x="576" y="487" width="1" height="2" fill="#fff"/><rect x="591" y="446" width="1" height="2" fill="#a60a0a"/><rect x="591" y="443" width="2" height="1" fill="#fff"/><rect x="587" y="469" width="2" height="3" fill="#fff"/><rect x="595" y="437" width="2" height="3" fill="#a60a0a"/><rect x="577" y="482" width="1" height="1" fill="#a60a0a"/><rect x="588" y="442" width="1" height="1" fill="#fff"/><rect x="581" y="514" width="1" height="2" fill="#fff"/><rect x="596" y="407" width="2" height="1" fill="#fff"/><rect x="597" y="544" width="1" height="1" fill="#a60a0a"/><rect x="595" y="408" width="1" height="3" fill="#fff"/><rect x="597" y="421" width="2" height="2" fill="#fff"/><rect x="591" y="438" width="2" height="2" fill="#a60a0a"/><rect x="579" y="470" width="1" height="2" fill="#fff"/><rect x="591" y="506" width="1" height="3" fill="#a60a0a"/><rect x="598" y="519" width="1" height="3" fill="#fff"/><rect x="596" y="401" width="2" height="1" fill="#fff"/><rect x="592" y="435" width="1" height="3" fill="#fff"/><rect x="595" y="371" width="1" height="1" fill="#a60a0a"/><rect x="590" y="469" width="1" height="3" fill="#fff"/><rect x="589" y="490" width="1" height="1" fill="#fff"/><rect x="595" y="516" width="1" height="1" fill="#fff"/><rect x="599" y="399" width="1" height="1" fill="#fff"/><rect x="581" y="478" width="1" height="2" fill="#fff"/><rect x="583" y="467" width="2" height="1" fill="#fff"/><rect x="588" y="480" width="1" height="3" fill="#fff"/><rect x="596" y="554" width="1" height="1" fill="#fff"/><rect x="591" y="535" width="1" height="1" fill="#fff"/><rect x="588" y="485" width="2" height="1" fill="#a60a0a"/><rect x="575" y="479" width="2" height="1" fill="#fff"/><rect x="582" y="506" width="1" height="2" fill="#fff"/><rect x="589" y="472" width="1" height="2" fill="#a60a0a"/><rect x="599" y="449" width="2" height="3" fill="#55585a"/><rect x="587" y="525" width="1" height="2" fill="#55585a"/><rect x="585" y="525" width="2" height="3" fill="#55585a"/><rect x="590" y="505" width="2" height="3" fill="#55585a"/><rect x="595" y="483" width="3" height="3" fill="#55585a"/><rect x="594" y="482" width="2" height="1" fill="#55585a"/><rect x="599" y="494" width="2" height="3" fill="#55585a"/><rect x="595" y="459" width="3" height="2" fill="#55585a"/><rect x="600" y="447" width="2" height="3" fill="#55585a"/><rect x="598" y="442" width="1" height="2" fill="#55585a"/><rect x="597" y="450" width="2" height="1" fill="#55585a"/><rect x="595" y="483" width="3" height="2" fill="#55585a"/><rect x="587" y="520" width="2" height="2" fill="#55585a"/><rect x="594" y="497" width="2" height="2" fill="#55585a"/><rect x="595" y="504" width="3" height="2" fill="#55585a"/><rect x="595" y="503" width="3" height="2" fill="#55585a"/><rect x="586" y="520" width="3" height="2" fill="#55585a"/><rect x="590" y="525" width="2" height="2" fill="#55585a"/><rect x="595" y="482" width="2" height="2" fill="#55585a"/><rect x="594" y="475" width="2" height="2" fill="#55585a"/><rect x="596" y="491" width="1" height="3" fill="#55585a"/><rect x="598" y="478" width="2" height="1" fill="#55585a"/><rect x="594" y="514" width="2" height="3" fill="#55585a"/><rect x="593" y="481" width="2" height="2" fill="#55585a"/><rect x="594" y="507" width="1" height="2" fill="#55585a"/><rect x="589" y="521" width="1" height="3" fill="#55585a"/><rect x="595" y="497" width="1" height="1" fill="#55585a"/><rect x="595" y="520" width="3" height="2" fill="#55585a"/><rect x="598" y="469" width="3" height="3" fill="#55585a"/><rect x="597" y="445" width="2" height="1" fill="#55585a"/><rect x="599" y="474" width="1" height="2" fill="#55585a"/><rect x="592" y="499" width="3" height="1" fill="#55585a"/><rect x="597" y="456" width="2" height="1" fill="#55585a"/><rect x="593" y="503" width="3" height="1" fill="#55585a"/><rect x="596" y="489" width="1" height="2" fill="#55585a"/><rect x="587" y="524" width="2" height="2" fill="#55585a"/><rect x="588" y="505" width="2" height="2" fill="#55585a"/><rect x="590" y="520" width="2" height="1" fill="#55585a"/><rect x="597" y="497" width="2" height="3" fill="#55585a"/><rect x="591" y="500" width="2" height="2" fill="#55585a"/><rect x="586" y="523" width="3" height="2" fill="#55585a"/><rect x="593" y="478" width="3" height="1" fill="#55585a"/><rect x="598" y="461" width="2" height="1" fill="#55585a"/><rect x="594" y="466" width="3" height="2" fill="#55585a"/><rect x="591" y="497" width="2" height="2" fill="#55585a"/><rect x="589" y="513" width="2" height="2" fill="#55585a"/><rect x="598" y="491" width="3" height="3" fill="#55585a"/><rect x="600" y="494" width="3" height="3" fill="#55585a"/><rect x="594" y="490" width="3" height="3" fill="#55585a"/><rect x="581" y="527" width="3" height="1" fill="#55585a"/><rect x="596" y="469" width="1" height="2" fill="#55585a"/><rect x="598" y="456" width="2" height="3" fill="#55585a"/><rect x="585" y="522" width="3" height="2" fill="#55585a"/><rect x="587" y="523" width="1" height="1" fill="#55585a"/><rect x="591" y="525" width="2" height="3" fill="#55585a"/></svg>
<div id="vr"><div class="a" style="left:11px;top:2px;width:2px;height:1px;background:#222"></div>
<div class="a" style="left:3px;top:13px;width:10px;height:1px;background:#222"></div>
<div class="a" style="left:11px;top:24px;width:2px;height:1px;background:#222"></div>
<span class="rl" style="left:0px;top:11px;transform-origin:0 0;transform:rotate(-90deg)">29</span>
<div class="a" style="left:3px;top:34px;width:10px;height:1px;background:#222"></div>
<div class="a" style="left:11px;top:45px;width:2px;height:1px;background:#222"></div>
<span class="rl" style="left:0px;top:32px;transform-origin:0 0;transform:rotate(-90deg)">28</span>
<div class="a" style="left:3px;top:56px;width:10px;height:1px;background:#222"></div>
<div class="a" style="left:11px;top:66px;width:2px;height:1px;background:#222"></div>
<span class="rl" style="left:0px;top:54px;transform-origin:0 0;transform:rotate(-90deg)">27</span>
<div class="a" style="left:3px;top:77px;width:10px;height:1px;background:#222"></div>
<div class="a" style="left:11px;top:87px;width:2px;height:1px;background:#222"></div>
<span class="rl" style="left:0px;top:75px;transform-origin:0 0;transform:rotate(-90deg)">26</span>
<div class="a" style="left:3px;top:98px;width:10px;height:1px;background:#222"></div>
<div class="a" style="left:11px;top:109px;width:2px;height:1px;background:#222"></div>
<span class="rl" style="left:0px;top:96px;transform-origin:0 0;transform:rotate(-90deg)">25</span>
<div class="a" style="left:3px;top:119px;width:10px;height:1px;background:#222"></div>
<div class="a" style="left:11px;top:130px;width:2px;height:1px;background:#222"></div>
<span class="rl" style="left:0px;top:117px;transform-origin:0 0;transform:rotate(-90deg)">24</span>
<div class="a" style="left:3px;top:140px;width:10px;height:1px;background:#222"></div>
<div class="a" style="left:11px;top:151px;width:2px;height:1px;background:#222"></div>
<span class="rl" style="left:0px;top:138px;transform-origin:0 0;transform:rotate(-90deg)">23</span>
<div class="a" style="left:3px;top:162px;width:10px;height:1px;background:#222"></div>
<div class="a" style="left:11px;top:172px;width:2px;height:1px;background:#222"></div>
<span class="rl" style="left:0px;top:160px;transform-origin:0 0;transform:rotate(-90deg)">22</span>
<div class="a" style="left:3px;top:183px;width:10px;height:1px;background:#222"></div>
<div class="a" style="left:11px;top:194px;width:2px;height:1px;background:#222"></div>
<span class="rl" style="left:0px;top:181px;transform-origin:0 0;transform:rotate(-90deg)">21</span>
<div class="a" style="left:3px;top:204px;width:10px;height:1px;background:#222"></div>
<div class="a" style="left:11px;top:215px;width:2px;height:1px;background:#222"></div>
<span class="rl" style="left:0px;top:202px;transform-origin:0 0;transform:rotate(-90deg)">20</span>
<div class="a" style="left:3px;top:226px;width:10px;height:1px;background:#222"></div>
<div class="a" style="left:11px;top:236px;width:2px;height:1px;background:#222"></div>
<span class="rl" style="left:0px;top:224px;transform-origin:0 0;transform:rotate(-90deg)">19</span>
<div class="a" style="left:3px;top:247px;width:10px;height:1px;background:#222"></div>
<div class="a" style="left:11px;top:257px;width:2px;height:1px;background:#222"></div>
<span class="rl" style="left:0px;top:245px;transform-origin:0 0;transform:rotate(-90deg)">18</span>
<div class="a" style="left:3px;top:268px;width:10px;height:1px;background:#222"></div>
<div class="a" style="left:11px;top:279px;width:2px;height:1px;background:#222"></div>
<span class="rl" style="left:0px;top:266px;transform-origin:0 0;transform:rotate(-90deg)">17</span>
<div class="a" style="left:3px;top:289px;width:10px;height:1px;background:#222"></div>
<div class="a" style="left:11px;top:300px;width:2px;height:1px;background:#222"></div>
<span class="rl" style="left:0px;top:287px;transform-origin:0 0;transform:rotate(-90deg)">16</span>
<div class="a" style="left:3px;top:310px;width:10px;height:1px;background:#222"></div>
<div class="a" style="left:11px;top:321px;width:2px;height:1px;background:#222"></div>
<span class="rl" style="left:0px;top:308px;transform-origin:0 0;transform:rotate(-90deg)">15</span>
<div class="a" style="left:3px;top:332px;width:10px;height:1px;background:#222"></div>
<div class="a" style="left:11px;top:342px;width:2px;height:1px;background:#222"></div>
<span class="rl" style="left:0px;top:330px;transform-origin:0 0;transform:rotate(-90deg)">14</span>
<div class="a" style="left:3px;top:353px;width:10px;height:1px;background:#222"></div>
<div class="a" style="left:11px;top:364px;width:2px;height:1px;background:#222"></div>
<span class="rl" style="left:0px;top:351px;transform-origin:0 0;transform:rotate(-90deg)">13</span>
<div class="a" style="left:3px;top:374px;width:10px;height:1px;background:#222"></div>
<div class="a" style="left:11px;top:385px;width:2px;height:1px;background:#222"></div>
<span class="rl" style="left:0px;top:372px;transform-origin:0 0;transform:rotate(-90deg)">12</span>
<div class="a" style="left:3px;top:396px;width:10px;height:1px;background:#222"></div>
<div class="a" style="left:11px;top:406px;width:2px;height:1px;background:#222"></div>
<span class="rl" style="left:0px;top:394px;transform-origin:0 0;transform:rotate(-90deg)">11</span>
<div class="a" style="left:3px;top:417px;width:10px;height:1px;background:#222"></div>
<div class="a" style="left:11px;top:427px;width:2px;height:1px;background:#222"></div>
<span class="rl" style="left:0px;top:415px;transform-origin:0 0;transform:rotate(-90deg)">10</span>
<div class="a" style="left:3px;top:438px;width:10px;height:1px;background:#222"></div>
<div class="a" style="left:11px;top:449px;width:2px;height:1px;background:#222"></div>
<span class="rl" style="left:0px;top:436px;transform-origin:0 0;transform:rotate(-90deg)">9</span>
<div class="a" style="left:3px;top:459px;width:10px;height:1px;background:#222"></div>
<div class="a" style="left:11px;top:470px;width:2px;height:1px;background:#222"></div>
<span class="rl" style="left:0px;top:457px;transform-origin:0 0;transform:rotate(-90deg)">8</span>
<div class="a" style="left:3px;top:480px;width:10px;height:1px;background:#222"></div>
<div class="a" style="left:11px;top:491px;width:2px;height:1px;background:#222"></div>
<span class="rl" style="left:0px;top:478px;transform-origin:0 0;transform:rotate(-90deg)">7</span></div>
<div id="hr"><div class="a" style="left:10px;top:11px;width:1px;height:3px;background:#222"></div>
<div class="a" style="left:21px;top:2px;width:1px;height:12px;background:#222"></div>
<span class="rl" style="left:23px;top:2px">1</span>
<div class="a" style="left:31px;top:11px;width:1px;height:3px;background:#222"></div>
<div class="a" style="left:42px;top:2px;width:1px;height:12px;background:#222"></div>
<span class="rl" style="left:44px;top:2px">2</span>
<div class="a" style="left:53px;top:11px;width:1px;height:3px;background:#222"></div>
<div class="a" style="left:63px;top:2px;width:1px;height:12px;background:#222"></div>
<span class="rl" style="left:65px;top:2px">3</span>
<div class="a" style="left:74px;top:11px;width:1px;height:3px;background:#222"></div>
<div class="a" style="left:84px;top:2px;width:1px;height:12px;background:#222"></div>
<span class="rl" style="left:86px;top:2px">4</span>
<div class="a" style="left:95px;top:11px;width:1px;height:3px;background:#222"></div>
<div class="a" style="left:105px;top:2px;width:1px;height:12px;background:#222"></div>
<span class="rl" style="left:107px;top:2px">5</span>
<div class="a" style="left:116px;top:11px;width:1px;height:3px;background:#222"></div>
<div class="a" style="left:127px;top:2px;width:1px;height:12px;background:#222"></div>
<span class="rl" style="left:129px;top:2px">6</span>
<div class="a" style="left:137px;top:11px;width:1px;height:3px;background:#222"></div>
<div class="a" style="left:148px;top:2px;width:1px;height:12px;background:#222"></div>
<span class="rl" style="left:150px;top:2px">7</span>
<div class="a" style="left:159px;top:11px;width:1px;height:3px;background:#222"></div>
<div class="a" style="left:169px;top:2px;width:1px;height:12px;background:#222"></div>
<span class="rl" style="left:171px;top:2px">8</span>
<div class="a" style="left:180px;top:11px;width:1px;height:3px;background:#222"></div></div>
<div id="menu">
 <div id="gut"></div>
 <div class="a" style="left:0px;top:-1px;width:47px;height:1px;background:#f9f9f9"></div>
 <div id="hl"></div>
 <svg style="left:6px;top:6px" width="16" height="12" viewBox="0 0 16 12"><path d="M0.500 9.8L4.500 6.4H15.500L11.500 9.8z" fill="#f8dc8c" stroke="#c4953a" stroke-width=".7"/><path d="M0.500 9.8v1.200H11.500v-1.200" fill="#e6bb5c" stroke="#c4953a" stroke-width=".4"/><path d="M0.500 6.8L4.500 3.4H15.500L11.500 6.8z" fill="#f8dc8c" stroke="#c4953a" stroke-width=".7"/><path d="M0.500 6.8v1.200H11.500v-1.200" fill="#e6bb5c" stroke="#c4953a" stroke-width=".4"/><path d="M0.500 3.8L4.500 0.4H15.500L11.500 3.8z" fill="#f8dc8c" stroke="#c4953a" stroke-width=".7"/><path d="M0.500 3.8v1.200H11.500v-1.200" fill="#e6bb5c" stroke="#c4953a" stroke-width=".4"/></svg>
<span class="a" style="left:7px;top:32.5px;font-size:9px;font-weight:bold;line-height:10px;color:#1f5f86;letter-spacing:-.9px;border-bottom:1px solid #1f5f86;height:10px;white-space:nowrap">Title</span>
<span class="a" style="left:7px;top:52px;font-family:'Liberation Serif',serif;font-weight:bold;font-size:18px;line-height:18px;color:#2b2b2b">A</span>
<div class="a" style="left:7px;top:102px;width:14px;height:14px;border:1px solid #2b2b2b;background:#fff"></div>
<svg style="left:7px;top:128px" width="15" height="16" viewBox="0 0 15 16"><rect x="0" y="0" width="3" height="3" fill="#3f6f7f" stroke="#4a5a5f" stroke-width=".5"/><rect x="5" y="1" width="8" height="1.300" fill="#25566e"/><rect x="0" y="4" width="3" height="3" fill="#8f9a4a" stroke="#4a5a5f" stroke-width=".5"/><rect x="5" y="5" width="6" height="1.300" fill="#25566e"/><rect x="0" y="8" width="3" height="3" fill="#e8b83a" stroke="#4a5a5f" stroke-width=".5"/><rect x="5" y="9" width="9" height="1.300" fill="#25566e"/><rect x="0" y="12" width="3" height="3" fill="#d8452f" stroke="#4a5a5f" stroke-width=".5"/><rect x="5" y="13" width="7" height="1.300" fill="#25566e"/></svg>
<svg style="left:10.5px;top:152.4px" width="7" height="5" viewBox="0 0 7 5"><path d="M3.500 0L6.600 3H4.400V4.600H2.600V3H0.400z" fill="#1f5a7a"/></svg>
<span class="a" style="left:11px;top:158px;font-size:8px;font-weight:bold;line-height:8px;color:#1f5a7a">N</span>
<svg style="left:6px;top:175px" width="16" height="13" viewBox="0 0 16 13"><text x="0" y="4.500" font-size="5" font-weight="bold" fill="#25566e" font-family="Liberation Sans, sans-serif">0</text><text x="6.600" y="4.500" font-size="5" font-weight="bold" fill="#25566e" font-family="Liberation Sans, sans-serif">5</text><text x="11.300" y="4.500" font-size="5" font-weight="bold" fill="#25566e" font-family="Liberation Sans, sans-serif">10</text><rect x="1.500" y="7" width="13.500" height="5" fill="#25566e" stroke="#25566e"/><rect x="2.500" y="7.800" width="4" height="1.600" fill="#fff"/><rect x="10.500" y="7.800" width="4" height="1.600" fill="#fff"/><rect x="6.500" y="9.700" width="4" height="1.600" fill="#fff"/></svg>
<span class="a" style="left:7px;top:199.5px;font-size:9px;line-height:12px;font-weight:bold;color:#25566e;white-space:nowrap">1:n</span>
<svg style="left:6px;top:223px" width="16" height="15" viewBox="0 0 16 15"><rect x="0.500" y="0.500" width="15" height="13.500" fill="#fff" stroke="#7486b0" stroke-width="1"/><defs><linearGradient id="pg" x1="0" y1="0" x2="0" y2="1"><stop offset="0" stop-color="#a9c9ea"/><stop offset=".6" stop-color="#dbe9f4"/><stop offset="1" stop-color="#7f9d86"/></linearGradient></defs><rect x="2.500" y="2.500" width="11" height="9.500" fill="url(#pg)" stroke="#8d9ab8" stroke-width=".6"/><path d="M3 9.500q2-2 3.500-.5 2-1.500 4 0l2.500.5v2H3z" fill="#86a883"/></svg>
<svg style="left:7px;top:246px" width="14" height="16" viewBox="0 0 14 16"><path d="M0.500 0.500H9.500L13.500 4.500V15.500H0.500z" fill="#fbfcfe" stroke="#7486b0" stroke-width="1"/><path d="M9.500 0.500V4.500H13.500" fill="#dfe6f3" stroke="#7486b0" stroke-width=".8"/><rect x="2.200" y="7.500" width="9.600" height="6" fill="#b9d36a" stroke="#5f8a2a" stroke-width=".8"/><rect x="4" y="9.500" width="2.600" height="2.400" fill="#f4f8df" stroke="#4d7a1f" stroke-width=".6"/><rect x="7.400" y="9" width="2.600" height="3" fill="#dce9a0" stroke="#4d7a1f" stroke-width=".6"/></svg>
 <span class="m" style="top:1px;letter-spacing:-.2px">Data Frame</span>
 <div class="sep" style="top:25px"></div>
 <span class="m" style="top:27px">Title</span>
 <span class="m" style="top:50px">Text</span>
 <span class="m" style="top:73px">Dynamic Text</span>
 <svg style="left:138px;top:80px" width="5" height="9" viewBox="0 0 5 9"><path d="M0.5 0.5v8L4.5 4.5z" fill="#111"/></svg>
 <div class="sep" style="top:97px"></div>
 <span class="m" style="top:99px">Neatline<span style="letter-spacing:-1px">...</span></span>
 <div class="sep" style="top:123px"></div>
 <span class="m" style="top:125px">Legend<span style="letter-spacing:-1px">...</span></span>
 <span class="m" style="top:148px;letter-spacing:.5px">North Arrow<span style="letter-spacing:-1px">...</span></span>
 <span class="m" style="top:171px;letter-spacing:-.6px">Scale <span style="margin-left:4px">Bar</span><span style="letter-spacing:-1px">...</span></span>
 <span class="m" style="top:194px;letter-spacing:-.6px">Scale <span style="margin-left:4px">Text</span><span style="letter-spacing:-1px">...</span></span>
 <div class="sep" style="top:218px"></div>
 <span class="m" style="top:220px">Picture<span style="letter-spacing:-1px">...</span></span>
 <span class="m" style="top:243px">Object<span style="letter-spacing:-1px">...</span></span>
</div>
<div id="tip">
 <div class="a" style="left:4px;top:6px;font-weight:bold;white-space:nowrap;color:#555a61;line-height:16px">Insert North Arrow</div>
 <div class="a" style="left:12px;top:32px;width:190px;line-height:16.500px;letter-spacing:.13px">Insert a north arrow in Layout view</div>
</div>
</body></html>
